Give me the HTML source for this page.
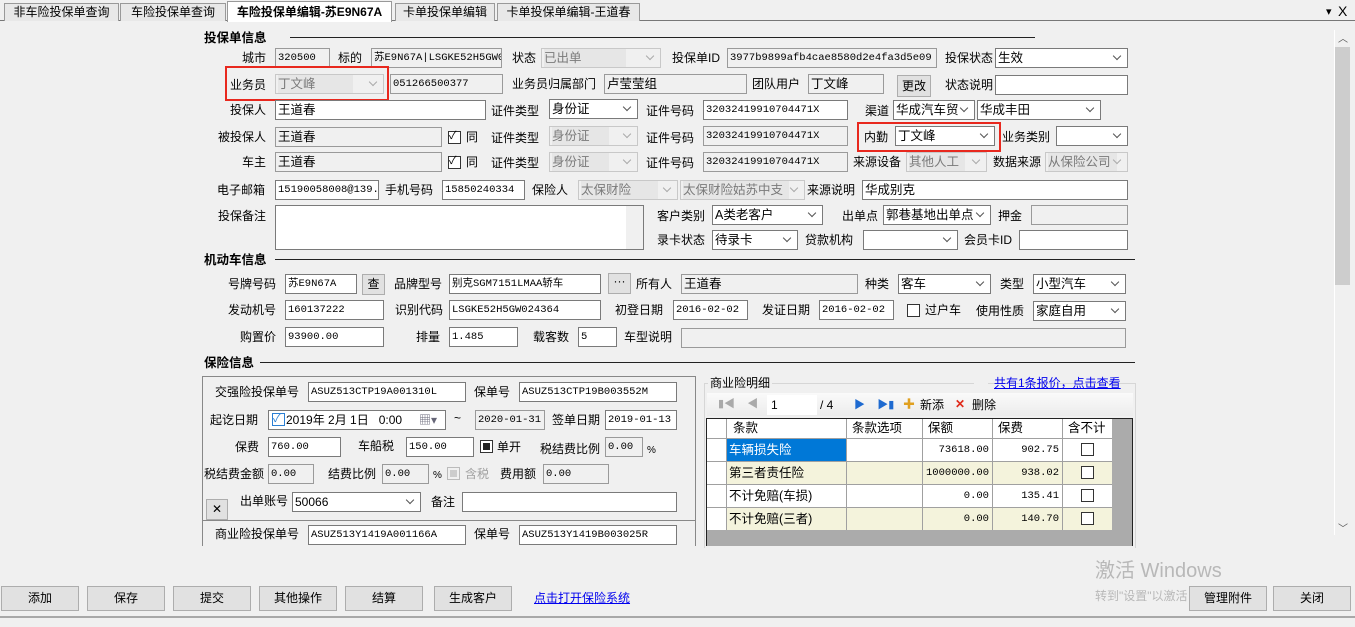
<!DOCTYPE html>
<html><head><meta charset="utf-8"><style>
*{box-sizing:border-box;margin:0;padding:0}
body{width:1355px;height:627px;background:#f0f0f0;position:relative;overflow:hidden;font-family:"Liberation Sans","Noto Sans CJK SC",sans-serif;font-size:12px;color:#000}
.a{position:absolute}
.l{position:absolute;white-space:nowrap;font-size:12px;line-height:20px;height:20px}
.i{position:absolute;height:20px;background:#fff;border:1px solid #7a7a7a;font-family:"Liberation Mono","Noto Sans CJK SC",monospace;font-size:10.5px;line-height:18px;padding-left:2px;white-space:nowrap;overflow:hidden}
.i.c{font-family:"Liberation Sans","Noto Sans CJK SC",sans-serif;font-size:12.5px}
.g{background:#f0f0f0;border-color:#9a9a9a}
.s{padding-right:18px}
.s:after{content:"";position:absolute;right:7px;top:4px;width:5px;height:5px;border-right:1px solid #555;border-bottom:1px solid #555;transform:rotate(45deg)}
.dis{background:#f0f0f0;border-color:#c8c8c8;color:#7a7a7a}
.dis:after{border-color:#aaa}
.dis span{background:#e6e6e6;display:inline-block;padding-right:6px}
.h{position:absolute;font-weight:bold;font-size:12.5px;line-height:16px}
.ln{position:absolute;height:1px;background:#222}
.cb{position:absolute;width:13px;height:13px;border:1px solid #333;background:#fff}
.btn{position:absolute;height:25px;background:#e1e1e1;border:1px solid #adadad;text-align:center;line-height:23px;font-size:12px}
.tab{position:absolute;top:3px;height:18px;border:1px solid #999;border-bottom:none;background:#e8e8e8;font-size:12px;line-height:16px;text-align:center;font-weight:normal}
.gr{position:absolute;font-size:12.5px;line-height:22px;white-space:nowrap}
</style></head><body>
<div class="a" style="left:0;top:20px;width:1355px;height:1px;background:#777"></div>
<div class="tab" style="left:4px;width:115px">非车险投保单查询</div>
<div class="tab" style="left:120px;width:106px">车险投保单查询</div>
<div class="tab" style="left:227px;width:165px;top:1px;height:21px;background:#fff;font-weight:bold;line-height:20px">车险投保单编辑-苏E9N67A</div>
<div class="tab" style="left:395px;width:100px">卡单投保单编辑</div>
<div class="tab" style="left:497px;width:143px">卡单投保单编辑-王道春</div>
<div class="l" style="left:1326px;top:2px;font-size:11px">▾</div>
<div class="l" style="left:1338px;top:1px;font-size:14px">X</div>
<div class="a" style="left:1334px;top:30px;width:1px;height:505px;background:#fff"></div>
<div class="a" style="left:1335px;top:30px;width:16px;height:505px;background:#f0f0f0"></div>
<div class="a" style="left:1335px;top:47px;width:15px;height:238px;background:#cdcdcd"></div>
<div class="l" style="left:1338px;top:30px;font-size:10px;color:#555">︿</div>
<div class="l" style="left:1338px;top:520px;font-size:10px;color:#555">﹀</div>

<div class="h" style="left:204px;top:30px">投保单信息</div>
<div class="ln" style="left:290px;top:37px;width:745px"></div>
<div class="l" style="left:242px;top:48px">城市</div>
<div class="i g" style="left:275px;top:48px;width:55px">320500</div>
<div class="l" style="left:338px;top:48px">标的</div>
<div class="i g" style="left:371px;top:48px;width:131px">苏E9N67A|LSGKE52H5GW0</div>
<div class="l" style="left:512px;top:48px">状态</div>
<div class="i c s dis" style="left:541px;top:48px;width:120px"><span>已出单&nbsp;&nbsp;&nbsp;&nbsp;&nbsp;&nbsp;&nbsp;&nbsp;&nbsp;&nbsp;&nbsp;</span></div>
<div class="l" style="left:672px;top:48px">投保单ID</div>
<div class="i g" style="left:727px;top:48px;width:210px">3977b9899afb4cae8580d2e4fa3d5e09</div>
<div class="l" style="left:945px;top:48px">投保状态</div>
<div class="i c s" style="left:995px;top:48px;width:133px">生效</div>
<div class="a" style="left:225px;top:66px;width:164px;height:35px;border:2px solid #e8281e"></div>
<div class="l" style="left:230px;top:75px">业务员</div>
<div class="i c s dis" style="left:275px;top:74px;width:109px"><span>丁文峰&nbsp;&nbsp;&nbsp;&nbsp;&nbsp;&nbsp;&nbsp;&nbsp;&nbsp;</span></div>
<div class="i g" style="left:390px;top:74px;width:113px">051266500377</div>
<div class="l" style="left:512px;top:74px">业务员归属部门</div>
<div class="i c g" style="left:604px;top:74px;width:143px">卢莹莹组</div>
<div class="l" style="left:752px;top:74px">团队用户</div>
<div class="i c g" style="left:808px;top:74px;width:76px">丁文峰</div>
<div class="btn" style="left:897px;top:75px;width:34px;height:22px;line-height:20px">更改</div>
<div class="l" style="left:945px;top:75px">状态说明</div>
<div class="i" style="left:995px;top:75px;width:133px"></div>
<div class="l" style="left:230px;top:100px">投保人</div>
<div class="i c" style="left:275px;top:100px;width:211px">王道春</div>
<div class="l" style="left:491px;top:101px">证件类型</div>
<div class="i c s" style="left:549px;top:99px;width:89px">身份证</div>
<div class="l" style="left:646px;top:101px">证件号码</div>
<div class="i" style="left:703px;top:100px;width:145px">32032419910704471X</div>
<div class="l" style="left:865px;top:101px">渠道</div>
<div class="i c s" style="left:893px;top:100px;width:82px">华成汽车贸</div>
<div class="i c s" style="left:977px;top:100px;width:124px">华成丰田</div>
<div class="l" style="left:218px;top:127px">被投保人</div>
<div class="i c g" style="left:275px;top:127px;width:167px">王道春</div>
<div class="cb" style="left:448px;top:131px"></div><div class="l" style="left:449px;top:126px;font-size:11px">✓</div>
<div class="l" style="left:466px;top:127px">同</div>
<div class="l" style="left:491px;top:128px">证件类型</div>
<div class="i c s dis" style="left:549px;top:126px;width:89px"><span>身份证&nbsp;&nbsp;&nbsp;&nbsp;</span></div>
<div class="l" style="left:646px;top:128px">证件号码</div>
<div class="i g" style="left:703px;top:126px;width:145px">32032419910704471X</div>
<div class="a" style="left:857px;top:122px;width:144px;height:30px;border:2px solid #e8281e"></div>
<div class="l" style="left:864px;top:127px">内勤</div>
<div class="i c s" style="left:895px;top:126px;width:100px">丁文峰</div>
<div class="l" style="left:1002px;top:127px">业务类别</div>
<div class="i c s" style="left:1056px;top:126px;width:72px"></div>
<div class="l" style="left:242px;top:152px">车主</div>
<div class="i c g" style="left:275px;top:152px;width:167px">王道春</div>
<div class="cb" style="left:448px;top:156px"></div><div class="l" style="left:449px;top:151px;font-size:11px">✓</div>
<div class="l" style="left:466px;top:152px">同</div>
<div class="l" style="left:491px;top:153px">证件类型</div>
<div class="i c s dis" style="left:549px;top:152px;width:89px"><span>身份证&nbsp;&nbsp;&nbsp;&nbsp;</span></div>
<div class="l" style="left:646px;top:153px">证件号码</div>
<div class="i g" style="left:703px;top:152px;width:145px">32032419910704471X</div>
<div class="l" style="left:853px;top:152px">来源设备</div>
<div class="i c s dis" style="left:906px;top:152px;width:81px"><span>其他人工</span></div>
<div class="l" style="left:993px;top:152px">数据来源</div>
<div class="i c s dis" style="left:1045px;top:152px;width:83px"><span>从保险公司</span></div>
<div class="l" style="left:217px;top:180px">电子邮箱</div>
<div class="i" style="left:275px;top:180px;width:104px">15190058008@139.</div>
<div class="l" style="left:385px;top:180px">手机号码</div>
<div class="i" style="left:442px;top:180px;width:83px">15850240334</div>
<div class="l" style="left:532px;top:180px">保险人</div>
<div class="i c s dis" style="left:578px;top:180px;width:100px"><span>太保财险&nbsp;&nbsp;&nbsp;&nbsp;&nbsp;&nbsp;</span></div>
<div class="i c s dis" style="left:680px;top:180px;width:125px"><span>太保财险姑苏中支</span></div>
<div class="l" style="left:807px;top:180px">来源说明</div>
<div class="i c" style="left:862px;top:180px;width:266px">华成别克</div>
<div class="l" style="left:218px;top:206px">投保备注</div>
<div class="i" style="left:275px;top:205px;width:369px;height:45px"><div class="a" style="right:0;top:0;width:17px;height:43px;background:#f0f0f0"></div></div>
<div class="l" style="left:657px;top:206px">客户类别</div>
<div class="i c s" style="left:712px;top:205px;width:111px">A类老客户</div>
<div class="l" style="left:842px;top:206px">出单点</div>
<div class="i c s" style="left:883px;top:205px;width:108px">郭巷基地出单点</div>
<div class="l" style="left:998px;top:206px">押金</div>
<div class="i g" style="left:1031px;top:205px;width:97px"></div>
<div class="l" style="left:657px;top:230px">录卡状态</div>
<div class="i c s" style="left:712px;top:230px;width:86px">待录卡</div>
<div class="l" style="left:805px;top:230px">贷款机构</div>
<div class="i c s" style="left:863px;top:230px;width:95px"></div>
<div class="l" style="left:964px;top:230px">会员卡ID</div>
<div class="i" style="left:1019px;top:230px;width:109px"></div>

<div class="h" style="left:204px;top:252px">机动车信息</div>
<div class="ln" style="left:275px;top:259px;width:860px"></div>
<div class="l" style="left:228px;top:274px">号牌号码</div>
<div class="i" style="left:285px;top:274px;width:72px">苏E9N67A</div>
<div class="btn" style="left:362px;top:274px;width:23px;height:21px;line-height:19px">查</div>
<div class="l" style="left:394px;top:274px">品牌型号</div>
<div class="i" style="left:449px;top:274px;width:152px">别克SGM7151LMAA轿车</div>
<div class="btn" style="left:608px;top:273px;width:23px;height:21px;line-height:14px">···</div>
<div class="l" style="left:636px;top:274px">所有人</div>
<div class="i c g" style="left:681px;top:274px;width:177px">王道春</div>
<div class="l" style="left:865px;top:274px">种类</div>
<div class="i c s" style="left:898px;top:274px;width:93px">客车</div>
<div class="l" style="left:1000px;top:274px">类型</div>
<div class="i c s" style="left:1033px;top:274px;width:93px">小型汽车</div>
<div class="l" style="left:228px;top:300px">发动机号</div>
<div class="i" style="left:285px;top:300px;width:99px">160137222</div>
<div class="l" style="left:395px;top:300px">识别代码</div>
<div class="i" style="left:449px;top:300px;width:152px">LSGKE52H5GW024364</div>
<div class="l" style="left:615px;top:300px">初登日期</div>
<div class="i" style="left:673px;top:300px;width:75px">2016-02-02</div>
<div class="l" style="left:762px;top:300px">发证日期</div>
<div class="i" style="left:819px;top:300px;width:75px">2016-02-02</div>
<div class="cb" style="left:907px;top:304px"></div>
<div class="l" style="left:925px;top:300px">过户车</div>
<div class="l" style="left:976px;top:301px">使用性质</div>
<div class="i c s" style="left:1033px;top:301px;width:93px">家庭自用</div>
<div class="l" style="left:240px;top:327px">购置价</div>
<div class="i" style="left:285px;top:327px;width:99px">93900.00</div>
<div class="l" style="left:416px;top:327px">排量</div>
<div class="i" style="left:449px;top:327px;width:69px">1.485</div>
<div class="l" style="left:533px;top:327px">载客数</div>
<div class="i" style="left:578px;top:327px;width:39px">5</div>
<div class="l" style="left:624px;top:327px">车型说明</div>
<div class="i g" style="left:681px;top:328px;width:445px"></div>

<div class="h" style="left:204px;top:355px">保险信息</div>
<div class="ln" style="left:260px;top:362px;width:875px"></div>
<div class="a" style="left:202px;top:376px;width:494px;height:170px;border:1px solid #888;border-bottom:none"></div>
<div class="a" style="left:203px;top:520px;width:492px;height:1px;background:#888"></div>
<div class="l" style="left:215px;top:382px">交强险投保单号</div>
<div class="i" style="left:308px;top:382px;width:158px">ASUZ513CTP19A001310L</div>
<div class="l" style="left:474px;top:382px">保单号</div>
<div class="i" style="left:519px;top:382px;width:158px">ASUZ513CTP19B003552M</div>
<div class="l" style="left:210px;top:410px">起讫日期</div>
<div class="i c" style="left:268px;top:410px;width:178px;font-size:12px;padding-left:17px">2019年 2月 1日&nbsp;&nbsp;&nbsp;0:00<span class="a" style="left:3px;top:2px;width:13px;height:13px;border:1px solid #2a7fd4;color:#2a7fd4;font-size:11px;line-height:11px">✓</span><span class="a" style="left:150px;top:0;color:#667">▦▾</span></div>
<div class="l" style="left:454px;top:408px">~</div>
<div class="i g" style="left:475px;top:410px;width:70px">2020-01-31</div>
<div class="l" style="left:552px;top:410px">签单日期</div>
<div class="i" style="left:605px;top:410px;width:72px">2019-01-13</div>
<div class="l" style="left:235px;top:437px">保费</div>
<div class="i" style="left:268px;top:437px;width:73px">760.00</div>
<div class="l" style="left:358px;top:436px">车船税</div>
<div class="i" style="left:406px;top:437px;width:68px">150.00</div>
<div class="cb" style="left:480px;top:440px"></div><div class="a" style="left:483px;top:443px;width:7px;height:7px;background:#222"></div>
<div class="l" style="left:497px;top:437px">单开</div>
<div class="l" style="left:540px;top:439px">税结费比例</div>
<div class="i g" style="left:605px;top:437px;width:38px">0.00</div>
<div class="l" style="left:647px;top:441px;font-size:10px">%</div>
<div class="l" style="left:204px;top:464px">税结费金额</div>
<div class="i g" style="left:268px;top:464px;width:46px">0.00</div>
<div class="l" style="left:328px;top:464px">结费比例</div>
<div class="i g" style="left:382px;top:464px;width:47px">0.00</div>
<div class="l" style="left:433px;top:466px;font-size:10px">%</div>
<div class="cb" style="left:447px;top:467px;border-color:#bbb;background:#f0f0f0"></div><div class="a" style="left:450px;top:470px;width:7px;height:7px;background:#ccc"></div>
<div class="l" style="left:465px;top:464px;color:#a0a0a0">含税</div>
<div class="l" style="left:500px;top:464px">费用额</div>
<div class="i g" style="left:543px;top:464px;width:66px">0.00</div>
<div class="btn" style="left:206px;top:499px;width:22px;height:21px;line-height:19px;font-size:12px">✕</div>
<div class="l" style="left:240px;top:491px">出单账号</div>
<div class="i c s" style="left:292px;top:492px;width:129px;font-size:12px">50066</div>
<div class="l" style="left:431px;top:492px">备注</div>
<div class="i" style="left:462px;top:492px;width:215px"></div>
<div class="l" style="left:215px;top:524px">商业险投保单号</div>
<div class="i" style="left:308px;top:525px;width:158px">ASUZ513Y1419A001166A</div>
<div class="l" style="left:474px;top:524px">保单号</div>
<div class="i" style="left:519px;top:525px;width:158px">ASUZ513Y1419B003025R</div>
<div class="a" style="left:704px;top:383px;width:432px;height:165px;border:1px solid #d6d6d6;border-bottom:none"></div>
<div class="l" style="left:708px;top:373px;background:#f0f0f0;padding:0 2px">商业险明细</div>
<div class="a" style="left:974px;top:378px;width:14px;height:10px;background:#f0f0f0"></div>
<div class="l" style="left:994px;top:373px;color:#0000ee;text-decoration:underline">共有1条报价，点击查看</div>
<div class="a" style="left:707px;top:393px;width:426px;height:23px;background:linear-gradient(#fafafa,#ececec)"></div>
<div class="l" style="left:718px;top:394px;color:#aaa;font-size:11px">▮◀&nbsp;&nbsp;&nbsp;&nbsp;◀</div>
<div class="a" style="left:767px;top:395px;width:50px;height:20px;background:#fff"></div>
<div class="l" style="left:771px;top:395px">1</div>
<div class="l" style="left:820px;top:395px">/ 4</div>
<div class="l" style="left:854px;top:395px;color:#1e6ad0;font-size:11px">▶&nbsp;&nbsp;&nbsp;&nbsp;▶▮</div>
<div class="l" style="left:903px;top:394px;color:#e0a020;font-weight:bold">✚</div>
<div class="l" style="left:920px;top:395px">新添</div>
<div class="l" style="left:955px;top:394px;color:#e02a1a;font-weight:bold">✕</div>
<div class="l" style="left:972px;top:395px">删除</div>
<div class="a" style="left:706px;top:418px;width:427px;height:128px;background:#ababab;border:1px solid #222;border-bottom:none"></div>
<div class="a" style="left:707px;top:419px;width:405px;height:111px;background:#a0a0a0"></div>
<div class="a" style="left:707px;top:419px;width:20px;height:111px;background:#fff"></div>
<div class="a" style="left:727px;top:419px;width:385px;height:19px;background:#fff"></div>
<div class="a" style="left:727px;top:439px;width:385px;height:22px;background:#fff"></div>
<div class="a" style="left:727px;top:462px;width:385px;height:22px;background:#f4f3dc"></div>
<div class="a" style="left:727px;top:485px;width:385px;height:22px;background:#fff"></div>
<div class="a" style="left:727px;top:508px;width:385px;height:22px;background:#f4f3dc"></div>
<div class="a" style="left:727px;top:439px;width:120px;height:22px;background:#0078d7"></div>
<div class="a" style="left:707px;top:438px;width:405px;height:1px;background:#a0a0a0"></div>
<div class="a" style="left:707px;top:461px;width:405px;height:1px;background:#a0a0a0"></div>
<div class="a" style="left:707px;top:484px;width:405px;height:1px;background:#a0a0a0"></div>
<div class="a" style="left:707px;top:507px;width:405px;height:1px;background:#a0a0a0"></div>
<div class="a" style="left:726px;top:419px;width:1px;height:111px;background:#a0a0a0"></div>
<div class="a" style="left:846px;top:419px;width:1px;height:111px;background:#a0a0a0"></div>
<div class="a" style="left:922px;top:419px;width:1px;height:111px;background:#a0a0a0"></div>
<div class="a" style="left:992px;top:419px;width:1px;height:111px;background:#a0a0a0"></div>
<div class="a" style="left:1062px;top:419px;width:1px;height:111px;background:#a0a0a0"></div>
<div class="gr" style="left:733px;top:418px;line-height:20px">条款</div>
<div class="gr" style="left:852px;top:418px;line-height:20px">条款选项</div>
<div class="gr" style="left:928px;top:418px;line-height:20px">保额</div>
<div class="gr" style="left:998px;top:418px;line-height:20px">保费</div>
<div class="gr" style="left:1068px;top:418px;line-height:20px">含不计</div>
<div class="gr" style="left:729px;top:439px;color:#fff">车辆损失险</div>
<div class="gr" style="left:729px;top:462px">第三者责任险</div>
<div class="gr" style="left:729px;top:485px">不计免赔(车损)</div>
<div class="gr" style="left:729px;top:508px">不计免赔(三者)</div>
<div class="gr" style="left:923px;width:66px;text-align:right;top:439px;font-family:'Liberation Mono',monospace;font-size:10.5px">73618.00</div>
<div class="gr" style="left:923px;width:66px;text-align:right;top:462px;font-family:'Liberation Mono',monospace;font-size:10.5px">1000000.00</div>
<div class="gr" style="left:923px;width:66px;text-align:right;top:485px;font-family:'Liberation Mono',monospace;font-size:10.5px">0.00</div>
<div class="gr" style="left:923px;width:66px;text-align:right;top:508px;font-family:'Liberation Mono',monospace;font-size:10.5px">0.00</div>
<div class="gr" style="left:993px;width:66px;text-align:right;top:439px;font-family:'Liberation Mono',monospace;font-size:10.5px">902.75</div>
<div class="gr" style="left:993px;width:66px;text-align:right;top:462px;font-family:'Liberation Mono',monospace;font-size:10.5px">938.02</div>
<div class="gr" style="left:993px;width:66px;text-align:right;top:485px;font-family:'Liberation Mono',monospace;font-size:10.5px">135.41</div>
<div class="gr" style="left:993px;width:66px;text-align:right;top:508px;font-family:'Liberation Mono',monospace;font-size:10.5px">140.70</div>
<div class="cb" style="left:1081px;top:443px"></div>
<div class="cb" style="left:1081px;top:466px"></div>
<div class="cb" style="left:1081px;top:489px"></div>
<div class="cb" style="left:1081px;top:512px"></div>
<div class="l" style="left:1095px;top:559px;font-size:20px;line-height:24px;height:24px;color:#b8b8b8">激活 Windows</div>
<div class="l" style="left:1095px;top:586px;color:#b8b8b8">转到"设置"以激活 Windows。</div>
<div class="btn" style="left:1px;top:586px;width:78px">添加</div>
<div class="btn" style="left:87px;top:586px;width:78px">保存</div>
<div class="btn" style="left:173px;top:586px;width:78px">提交</div>
<div class="btn" style="left:259px;top:586px;width:78px">其他操作</div>
<div class="btn" style="left:345px;top:586px;width:78px">结算</div>
<div class="btn" style="left:434px;top:586px;width:78px">生成客户</div>
<div class="l" style="left:534px;top:588px;color:#0000ee;text-decoration:underline">点击打开保险系统</div>
<div class="btn" style="left:1189px;top:586px;width:78px">管理附件</div>
<div class="btn" style="left:1273px;top:586px;width:78px">关闭</div>
<div class="a" style="left:0;top:616px;width:1355px;height:2px;background:#a8a8a8"></div>
</body></html>
